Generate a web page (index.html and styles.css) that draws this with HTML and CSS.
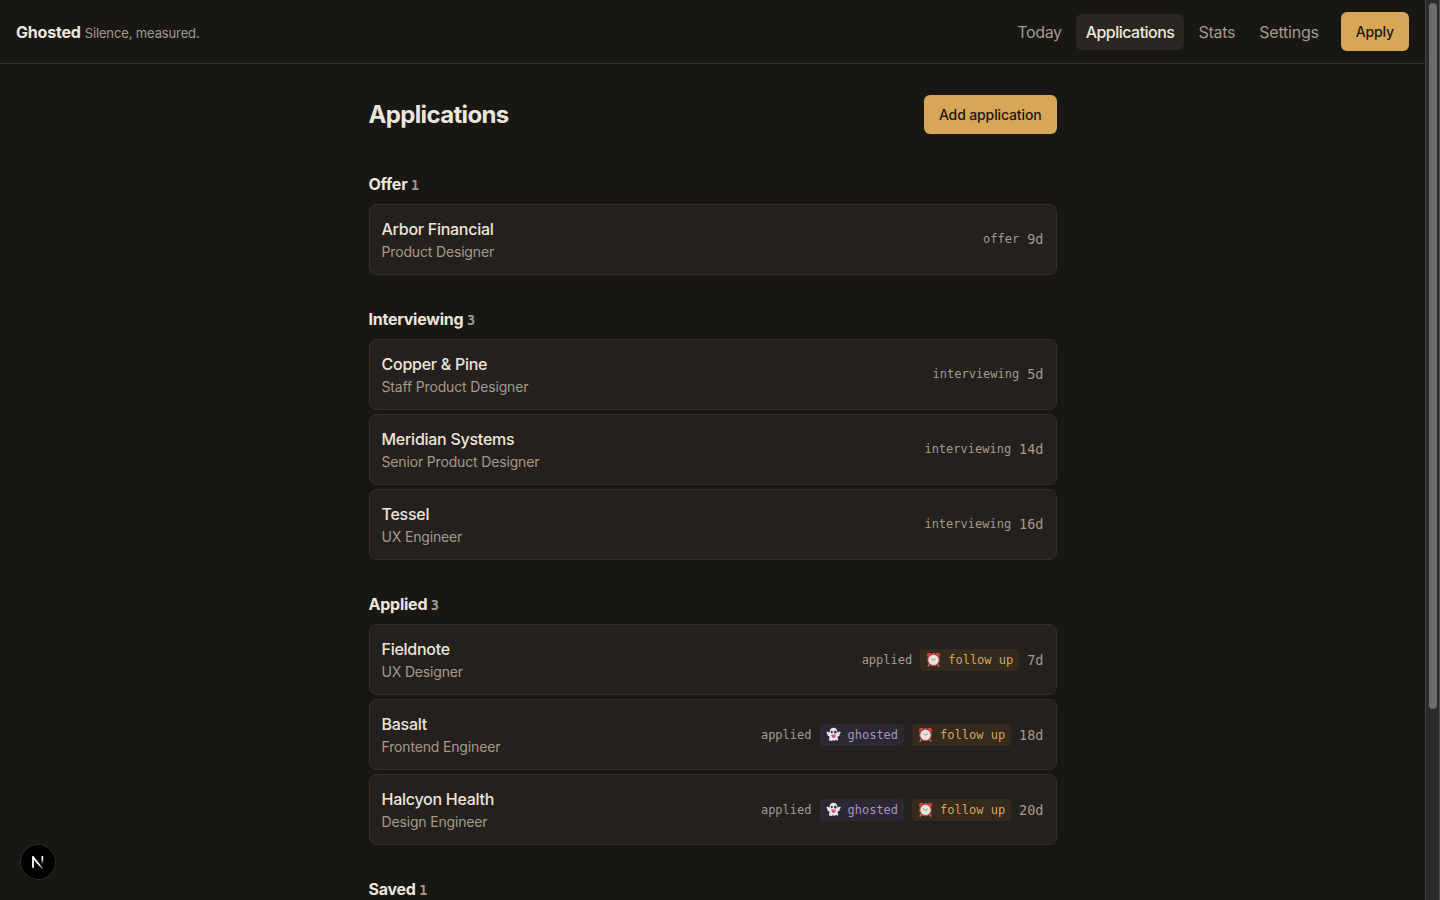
FILE: index.html
```html
<!DOCTYPE html>
<html lang="en">
	<head>
		<meta charset="UTF-8" />
		<meta name="viewport" content="width=device-width, initial-scale=1.0" />
		<title>Ghosted</title>
		<link rel="stylesheet" href="styles.css">
	</head>
	<body>
		<!-- shared icons -->
		<svg class="sprite" aria-hidden="true">
			<symbol id="clock" viewBox="0 0 16 16">
				<path d="M4 12.5L2.3 15M12 12.5l1.7 2.5" stroke="#8d8d8d" stroke-width="1.5" stroke-linecap="round" />
				<path d="M8 1v2" stroke="#b9b4b0" stroke-width="1.5" />
				<circle cx="3.6" cy="3.4" r="2.600" fill="#c94442" />
				<circle cx="12.4" cy="3.4" r="2.600" fill="#c94442" />
				<circle cx="8" cy="8.4" r="6.8" fill="#c4403e" />
				<circle cx="8" cy="8.4" r="5.5" fill="#e6e4e1" />
				<path d="M5.3 6.9L8 8.8l2.3-1.5" fill="none" stroke="#77736f" stroke-width=".8" />
			</symbol>
			<symbol id="ghost" viewBox="0 0 16 16">
				<path d="M8 .8c2.7 0 4.1 1.900 4.200 4.600 0 .7.5.6 1 .1.9-.9 2.800-.4 2.500.7-.3 1-1.500 1.400-1.200 2.100.4.8-.4 1.300-1.300 1.500-.9.3-.9 1.200-.6 2.300.3 1.500 1 2.500-.3 2.400-1 0-1.400-.9-2.200-.5-.8.5-1.200 1.200-2 .5-.6-.5-1.200-.2-1.800.2-1 .6-1.200-.5-2.100-.2-1.300.5-1.400-.6-.8-2.100.4-1 .6-2.300-.4-2.600-.9-.2-1.700-.7-1.300-1.500.4-.7-1-1.100-1.200-2.100-.3-1.100 1.500-1.600 2.400-.7.5.5 1 .6 1-.1C3.900 2.700 5.300.8 8 .8z" fill="#e9e7e8" />
				<ellipse cx="6.2" cy="5.3" rx="1" ry="1.3" fill="#2b2828" />
				<ellipse cx="9.9" cy="5.3" rx="1.3" ry="1.6" fill="#2b2828" />
				<path d="M5.7 8.100h4.700c0 2.300-.8 3.600-2.200 3.600S5.700 10.400 5.700 8.100z" fill="#d8518a" />
			</symbol>
		</svg>

		<div class="window">
			<div class="page">
				<header class="topbar">
					<div class="brand"><strong>Ghosted</strong><span class="tagline">Silence, measured.</span></div>
					<nav class="nav">
						<a>Today</a>
						<a class="active">Applications</a>
						<a>Stats</a>
						<a>Settings</a>
						<button class="button apply">Apply</button>
					</nav>
				</header>

				<main class="content">
					<div class="title-row">
						<h1>Applications</h1>
						<button class="button">Add application</button>
					</div>

					<section>
						<h2>Offer <span class="count">1</span></h2>
						<ul class="list">
							<li class="card">
								<div><div class="company">Arbor Financial</div><div class="role">Product Designer</div></div>
								<div class="meta plain"><span>offer</span><span class="days">9d</span></div>
							</li>
						</ul>
					</section>

					<section>
						<h2>Interviewing <span class="count">3</span></h2>
						<ul class="list">
							<li class="card">
								<div><div class="company">Copper &amp; Pine</div><div class="role">Staff Product Designer</div></div>
								<div class="meta plain"><span>interviewing</span><span class="days">5d</span></div>
							</li>
							<li class="card">
								<div><div class="company">Meridian Systems</div><div class="role">Senior Product Designer</div></div>
								<div class="meta plain"><span>interviewing</span><span class="days">14d</span></div>
							</li>
							<li class="card">
								<div><div class="company">Tessel</div><div class="role">UX Engineer</div></div>
								<div class="meta plain"><span>interviewing</span><span class="days">16d</span></div>
							</li>
						</ul>
					</section>

					<section>
						<h2>Applied <span class="count">3</span></h2>
						<ul class="list">
							<li class="card">
								<div><div class="company">Fieldnote</div><div class="role">UX Designer</div></div>
								<div class="meta">
									<span>applied</span>
									<span class="badge follow"><svg><use href="#clock" /></svg>follow up</span>
									<span class="days">7d</span>
								</div>
							</li>
							<li class="card">
								<div><div class="company">Basalt</div><div class="role">Frontend Engineer</div></div>
								<div class="meta">
									<span>applied</span>
									<span class="badge ghosted"><svg><use href="#ghost" /></svg>ghosted</span>
									<span class="badge follow"><svg><use href="#clock" /></svg>follow up</span>
									<span class="days">18d</span>
								</div>
							</li>
							<li class="card">
								<div><div class="company">Halcyon Health</div><div class="role">Design Engineer</div></div>
								<div class="meta">
									<span>applied</span>
									<span class="badge ghosted"><svg><use href="#ghost" /></svg>ghosted</span>
									<span class="badge follow"><svg><use href="#clock" /></svg>follow up</span>
									<span class="days">20d</span>
								</div>
							</li>
						</ul>
					</section>

					<section>
						<h2>Saved <span class="count">1</span></h2>
					</section>
				</main>
			</div>
			<div class="scrollbar"><div class="thumb"></div></div>
		</div>

		<div class="dev-badge">
			<svg width="36" height="36" viewBox="0 0 36 36">
				<defs>
					<linearGradient id="fade" x1="0" y1="0" x2="0" y2="1">
						<stop offset="0.3" stop-color="#fff" />
						<stop offset="1" stop-color="#fff" stop-opacity="0" />
					</linearGradient>
					<linearGradient id="fade-tail" x1="0" y1="0" x2="0" y2="1">
						<stop offset="0.6" stop-color="#fff" />
						<stop offset="1" stop-color="#fff" stop-opacity="0.2" />
					</linearGradient>
				</defs>
				<path d="M12.6 12.6L22.600 25" fill="none" stroke="url(#fade-tail)" stroke-width="1.8" />
				<path d="M13 12.2V23.8" stroke="#fff" stroke-width="1.8" />
				<rect x="21.5" y="12" width="1.7" height="9" fill="url(#fade)" />
			</svg>
		</div>
	</body>
</html>
```
FILE: styles.css
```css
* {
	box-sizing: border-box;
}
body {
	margin: 0;
	background-color: #181714;
	color: #ede6da;
	font-family: Inter, "Liberation Sans", sans-serif;
	font-size: 16px;
	line-height: 24px;
	overflow: hidden;
}
.sprite {
	display: none;
}
.window {
	display: flex;
	height: 100vh;
	overflow: hidden;
}
.page {
	flex: 1;
}
.topbar {
	display: flex;
	justify-content: space-between;
	align-items: center;
	height: 64px;
	padding: 0 16px;
	border-bottom: 1px solid #33312e;
}
.brand {
	display: flex;
	align-items: baseline;
	gap: 4px;
	padding-top: 1px;
}
.brand strong {
	font-weight: 700;
	letter-spacing: -0.2px;
}
.tagline {
	font-size: 13px;
	letter-spacing: -0.13px;
	color: #a39a8c;
}
.nav {
	display: flex;
	align-items: center;
	gap: 4px;
}
.nav a {
	padding: 6px 10px;
	border-radius: 6px;
	color: #a39a8c;
	letter-spacing: -0.23px;
}
.nav a:first-child {
	letter-spacing: -0.35px;
}
.nav .active {
	background-color: #2a2722;
	color: #ede6da;
	font-weight: 500;
	letter-spacing: -0.53px;
}
.button {
	height: 39px;
	padding: 0 15px;
	border: none;
	border-radius: 6px;
	background-color: #d8a657;
	color: #181714;
	font: 500 14px Inter, "Liberation Sans", sans-serif;
	letter-spacing: -0.13px;
}
.apply {
	margin-left: 8px;
}
.content {
	width: 688px;
	margin: 31px auto 0;
}
.title-row {
	display: flex;
	justify-content: space-between;
	align-items: center;
	margin-bottom: 38px;
}
h1 {
	margin: 0;
	font-size: 24px;
	font-weight: 700;
	letter-spacing: -0.65px;
}
h2 {
	height: 24px;
	margin: 0 0 8px;
	font-size: 16px;
	line-height: 24px;
	font-weight: 700;
	letter-spacing: -0.24px;
}
section {
	margin-bottom: 32px;
}
.count {
	font-family: "DejaVu Sans Mono", monospace;
	font-size: 13.5px;
	line-height: 1;
	color: #a39a8c;
}
.list {
	display: flex;
	flex-direction: column;
	gap: 4px;
	margin: 0;
	padding: 0;
	list-style: none;
}
.card {
	display: flex;
	justify-content: space-between;
	align-items: center;
	height: 71px;
	padding: 0 12px;
	border: 1px solid #33302c;
	border-radius: 8px;
	background-color: #24201d;
}
.company {
	font-weight: 500;
	letter-spacing: -0.26px;
}
.role {
	font-size: 14px;
	line-height: 22px;
	letter-spacing: -0.16px;
	color: #a39a8c;
}
.meta {
	display: flex;
	align-items: center;
	gap: 8px;
	font-family: "DejaVu Sans Mono", monospace;
	font-size: 12px;
	color: #a39a8c;
}
.plain {
	padding-bottom: 1px;
}
.days {
	font-size: 13.5px;
}
.badge {
	display: flex;
	align-items: center;
	gap: 7px;
	height: 22px;
	padding: 0 6px;
	border-radius: 4px;
}
.badge svg {
	width: 15px;
	height: 15px;
}
.follow {
	background-color: #342a1d;
	color: #d8a657;
}
.ghosted {
	background-color: #2b2733;
	color: #a395bd;
}
.scrollbar {
	width: 15px;
	padding: 3px 3px 0;
	border-left: 1px solid #3f3f3f;
	border-right: 1px solid #50504e;
	background-color: #2b2b2b;
}
.thumb {
	width: 8px;
	height: 706px;
	border-radius: 4px;
	background-color: #6b6b6b;
}
/* floats above the page */
.dev-badge {
	position: fixed;
	left: 20px;
	bottom: 20px;
	width: 36px;
	height: 36px;
	border-radius: 50%;
	background-color: #000;
	box-shadow: inset 0 0 0 1px #2b2b2a;
}
```
